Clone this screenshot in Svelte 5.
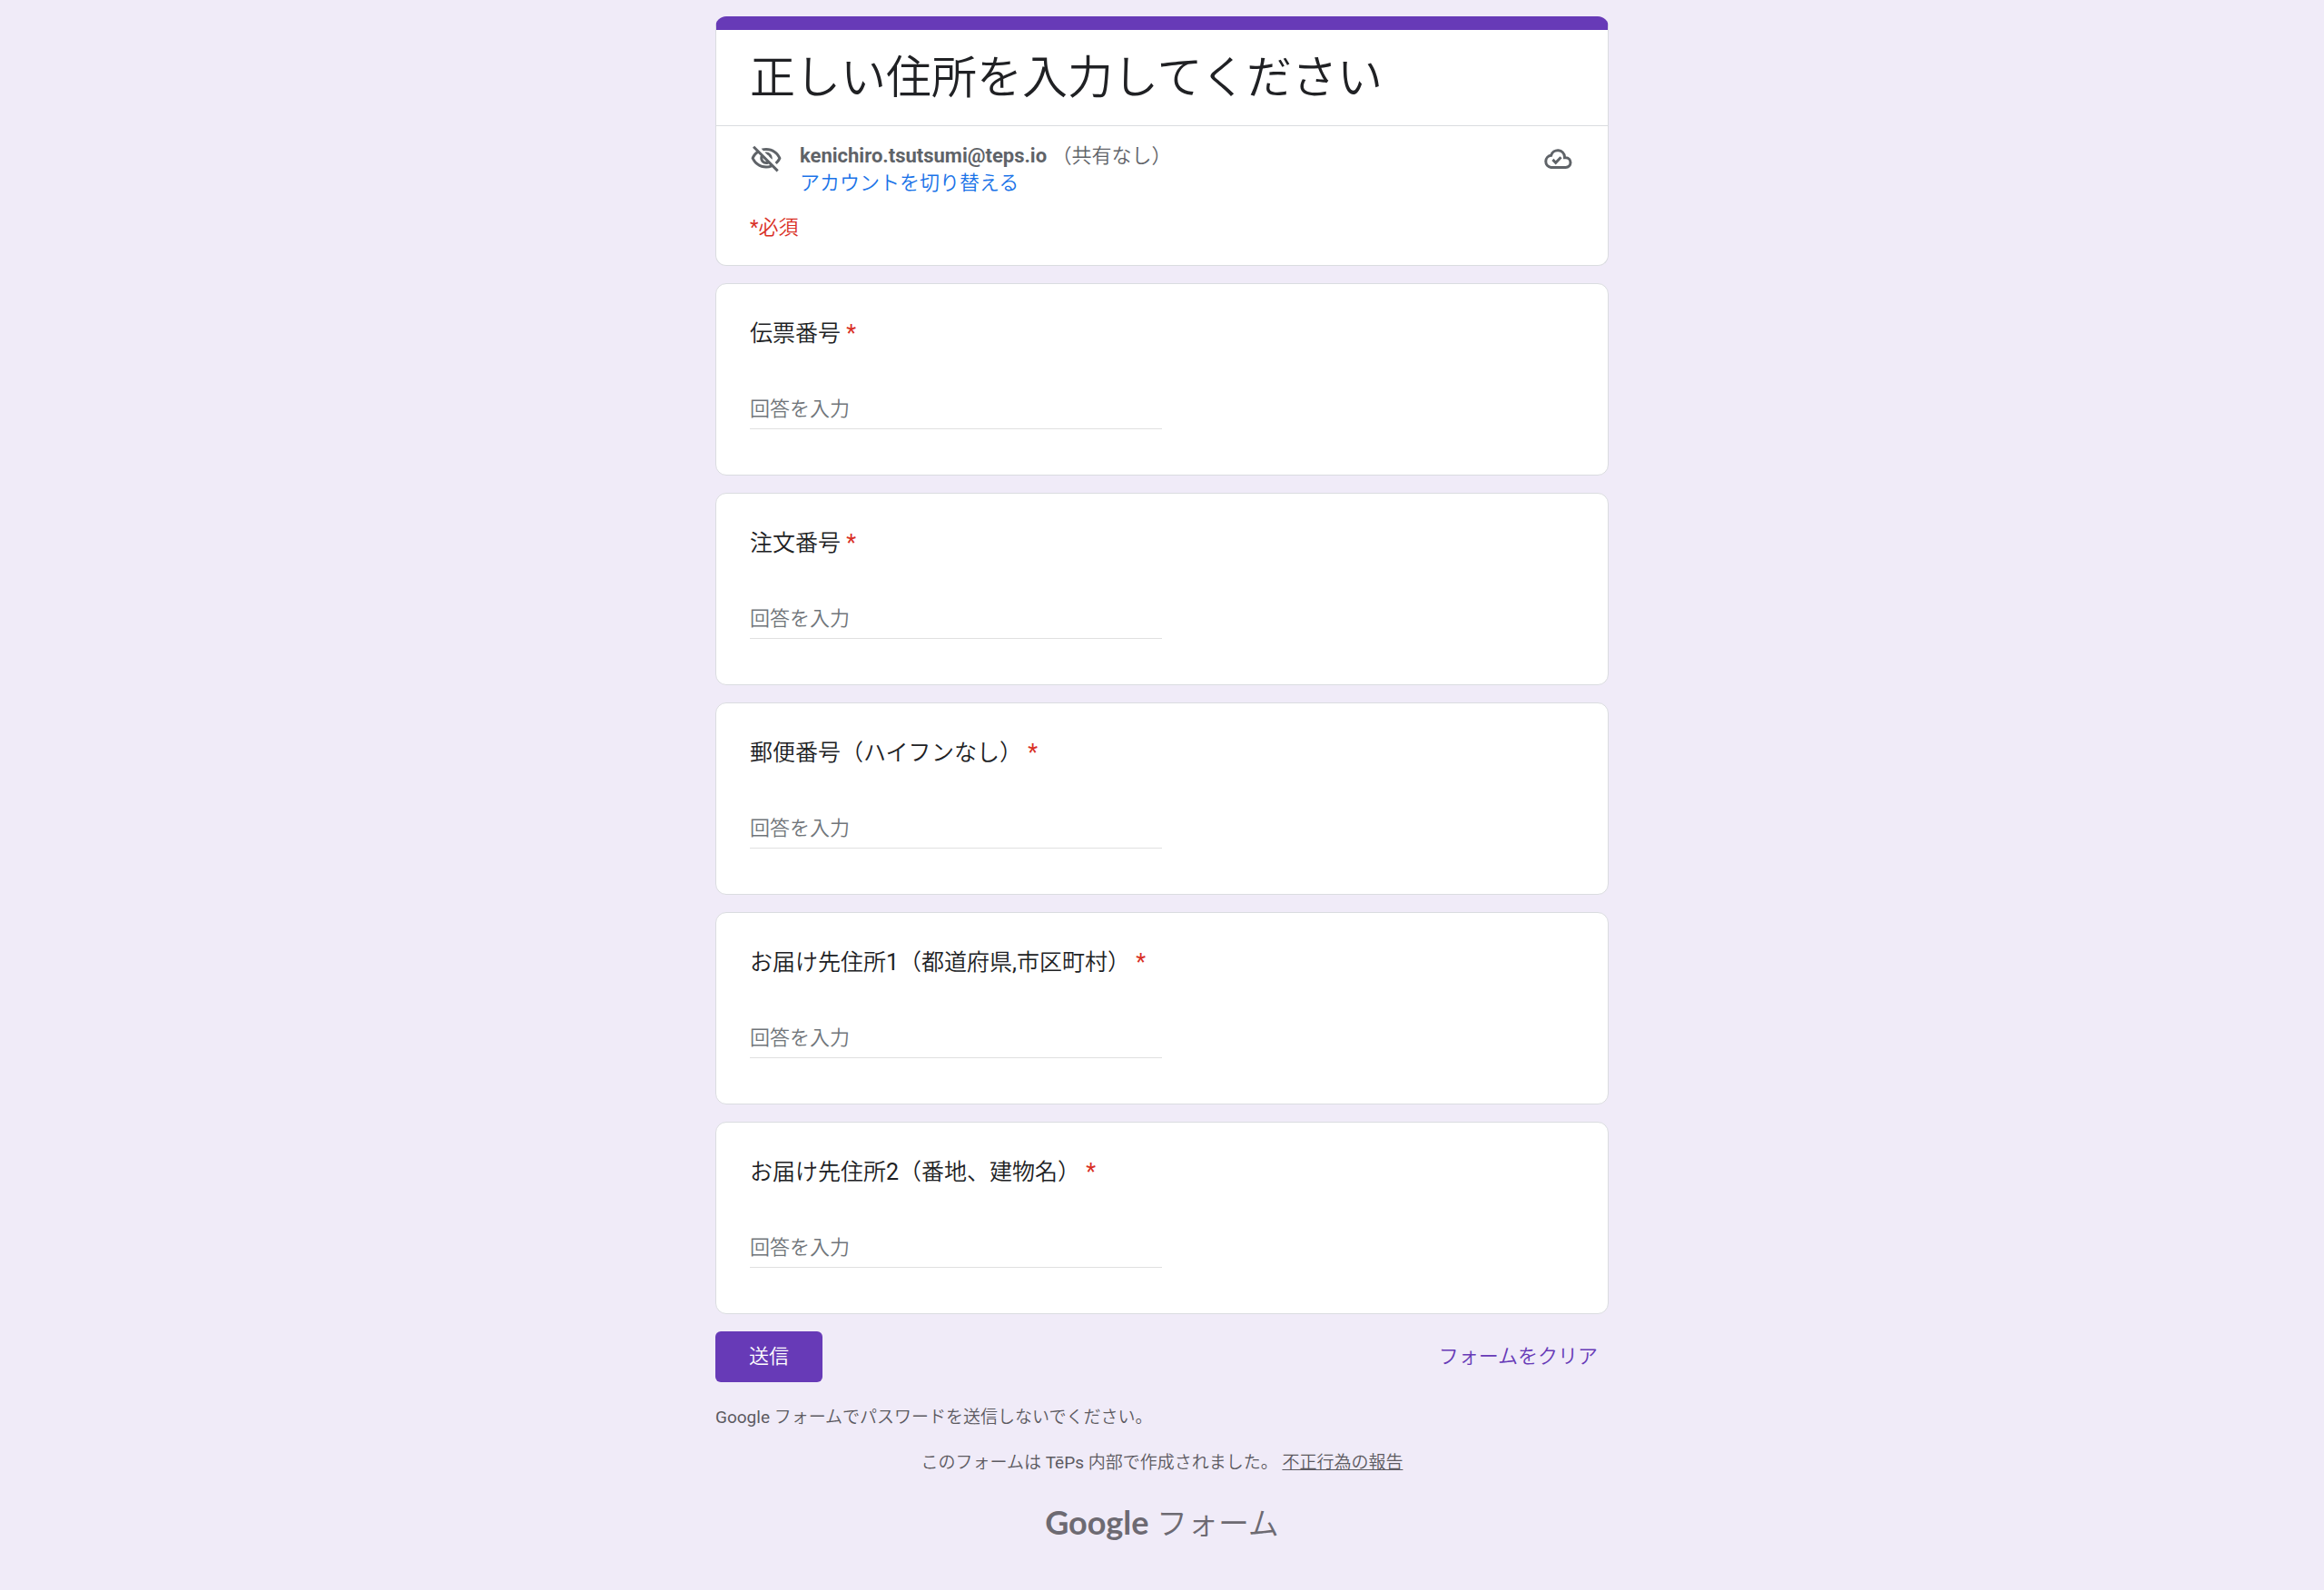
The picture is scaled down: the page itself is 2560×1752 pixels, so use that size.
<script lang="ts">
    interface Question {
        id: string;
        label: string;
    }

    const questions: Question[] = [
        {id: "slip", label: "伝票番号"},
        {id: "order", label: "注文番号"},
        {id: "zip", label: "郵便番号（ハイフンなし）"},
        {id: "address1", label: "お届け先住所1（都道府県,市区町村）"},
        {id: "address2", label: "お届け先住所2（番地、建物名）"},
    ];

    const blank = () => Object.fromEntries(questions.map((q) => [q.id, ""]));

    let answers: Record<string, string> = $state(blank());

    function clear() {
        answers = blank();
    }
</script>

<main>
    <form onsubmit={(e) => e.preventDefault()}>
        <header class="card intro">
            <h1>正しい住所を入力してください</h1>
            <div class="account">
                <svg class="eye" viewBox="0 0 24 24" aria-hidden="true">
                    <path d="M12 6c3.79 0 7.17 2.13 8.82 5.5-.59 1.22-1.42 2.27-2.41 3.12l1.41 1.41c1.39-1.23 2.49-2.77 3.18-4.53C21.27 7.11 17 4 12 4c-1.27 0-2.49.2-3.64.57l1.65 1.65C10.66 6.09 11.32 6 12 6zm-1.07 1.14L13 9.21c.57.25 1.03.71 1.28 1.28l2.07 2.07c.08-.34.14-.7.14-1.07C16.5 9.01 14.48 7 12 7c-.37 0-.72.05-1.07.14zM2.01 3.87l2.68 2.68C3.06 7.83 1.77 9.53 1 11.5 2.73 15.89 7 19 12 19c1.52 0 2.98-.29 4.32-.82l3.42 3.42 1.41-1.41L3.42 2.45 2.01 3.87zm7.5 7.5l2.61 2.61c-.04.01-.08.02-.12.02-1.38 0-2.5-1.12-2.5-2.5 0-.05.01-.08.01-.13zm-3.4-3.4l1.75 1.75c-.23.55-.36 1.15-.36 1.78 0 2.48 2.02 4.5 4.5 4.5.63 0 1.23-.13 1.77-.36l.98.98c-.88.24-1.8.38-2.75.38-3.79 0-7.17-2.13-8.82-5.5.7-1.43 1.72-2.61 2.93-3.53z" />
                </svg>
                <div class="who">
                    <div><strong>kenichiro.tsutsumi@teps.io</strong> （共有なし）</div>
                    <a href="#switch">アカウントを切り替える</a>
                </div>
                <svg class="cloud" viewBox="0 0 32 32" aria-hidden="true">
                    <path d="M8.5 25.4h16.2a5.3 5.3 0 0 0 0-10.6h-1.2v-.9a7.6 7.6 0 0 0-14.9-1.6 6.6 6.6 0 0 0-.1 13.1z" />
                    <path d="M10.4 16.9l3.3 3.4 5.8-6" />
                </svg>
            </div>
            <p class="required-note">*必須</p>
        </header>

        {#each questions as q (q.id)}
            <section class="card question">
                <label for={q.id}>{q.label} <span class="star">*</span></label>
                <input id={q.id} type="text" placeholder="回答を入力" bind:value={answers[q.id]} />
            </section>
        {/each}

        <div class="actions">
            <button class="submit" type="submit">送信</button>
            <button class="clear" type="button" onclick={clear}>フォームをクリア</button>
        </div>
    </form>

    <p class="warning">Google フォームでパスワードを送信しないでください。</p>

    <footer>
        <p>このフォームは TēPs 内部で作成されました。 <a href="#report">不正行為の報告</a></p>
        <a class="logo" href="#forms"><span class="brand">Google</span> フォーム</a>
    </footer>
</main>

<style>
:global(body) {
    background: #f0ebf8;
}

main {
    box-sizing: border-box;
    max-width: 984px;
    margin: 0 auto;
    padding: 18px 0 48px;
    color: #202124;
    font-family: Roboto, "Noto Sans CJK JP DemiLight", "Noto Sans CJK JP", sans-serif;
    font-size: 22px;
    line-height: 30px;
}

form {
    display: flex;
    flex-direction: column;
    gap: 19px;
}

.card {
    background: #fff;
    border: 1px solid #dadce0;
    border-radius: 12px;
}

.intro {
    border-top: 15px solid #673ab7;
    overflow: hidden;
}

h1 {
    margin: 0;
    padding: 21px 37px 20px;
    border-bottom: 1px solid #dadce0;
    font-size: 50px;
    font-weight: 350;
    line-height: 64px;
}

.account {
    display: flex;
    align-items: flex-start;
    padding: 18px 37px 0;
    color: #5f6368;
}

svg {
    flex-shrink: 0;
}

.eye {
    width: 36px;
    height: 36px;
    margin-right: 19px;
    fill: #5f6368;
}

.cloud {
    width: 32px;
    height: 32px;
    margin: 2px 2px 0 0;
    fill: none;
    stroke: #5f6368;
    stroke-width: 3;
}

.who {
    flex: 1;
}

strong {
    font-weight: 700;
}

.who a {
    color: #1a73e8;
    text-decoration: none;
}

.required-note {
    margin: 19px 37px 26px;
    color: #d93025;
}

.question {
    display: flex;
    flex-direction: column;
    align-items: flex-start;
    padding: 37px 37px 50px;
}

label {
    margin-bottom: 47px;
    font-size: 25px;
    line-height: 36px;
}

.star {
    color: #d93025;
}

input {
    box-sizing: border-box;
    width: 50%;
    height: 40px;
    padding: 0 0 4px;
    border: none;
    border-bottom: 1px solid #e0e0e0;
    outline: none;
    background: none;
    color: inherit;
    font: inherit;
}

input::placeholder {
    color: #70757a;
    opacity: 1;
}

input:focus {
    border-bottom-color: #673ab7;
}

.actions {
    display: flex;
    justify-content: space-between;
    align-items: center;
}

button {
    height: 56px;
    padding: 0 37px;
    border: none;
    border-radius: 6px;
    font: inherit;
    cursor: pointer;
}

.submit {
    background: #673ab7;
    color: #fff;
}

.clear {
    padding: 0 12px;
    background: none;
    color: #673ab7;
}

.warning {
    margin: 24px 0 20px;
    color: #5c5a61;
    font-size: 19px;
}

footer {
    display: flex;
    flex-direction: column;
    align-items: center;
    color: #5c5a61;
    font-size: 19px;
}

footer p {
    margin: 0 0 28px;
}

footer a {
    color: inherit;
}

.logo {
    color: #6d6a72;
    font-size: 34px;
    line-height: 44px;
    text-decoration: none;
}

.brand {
    font-family: Lato, Roboto, sans-serif;
    font-size: 36px;
    font-weight: 700;
}
</style>
